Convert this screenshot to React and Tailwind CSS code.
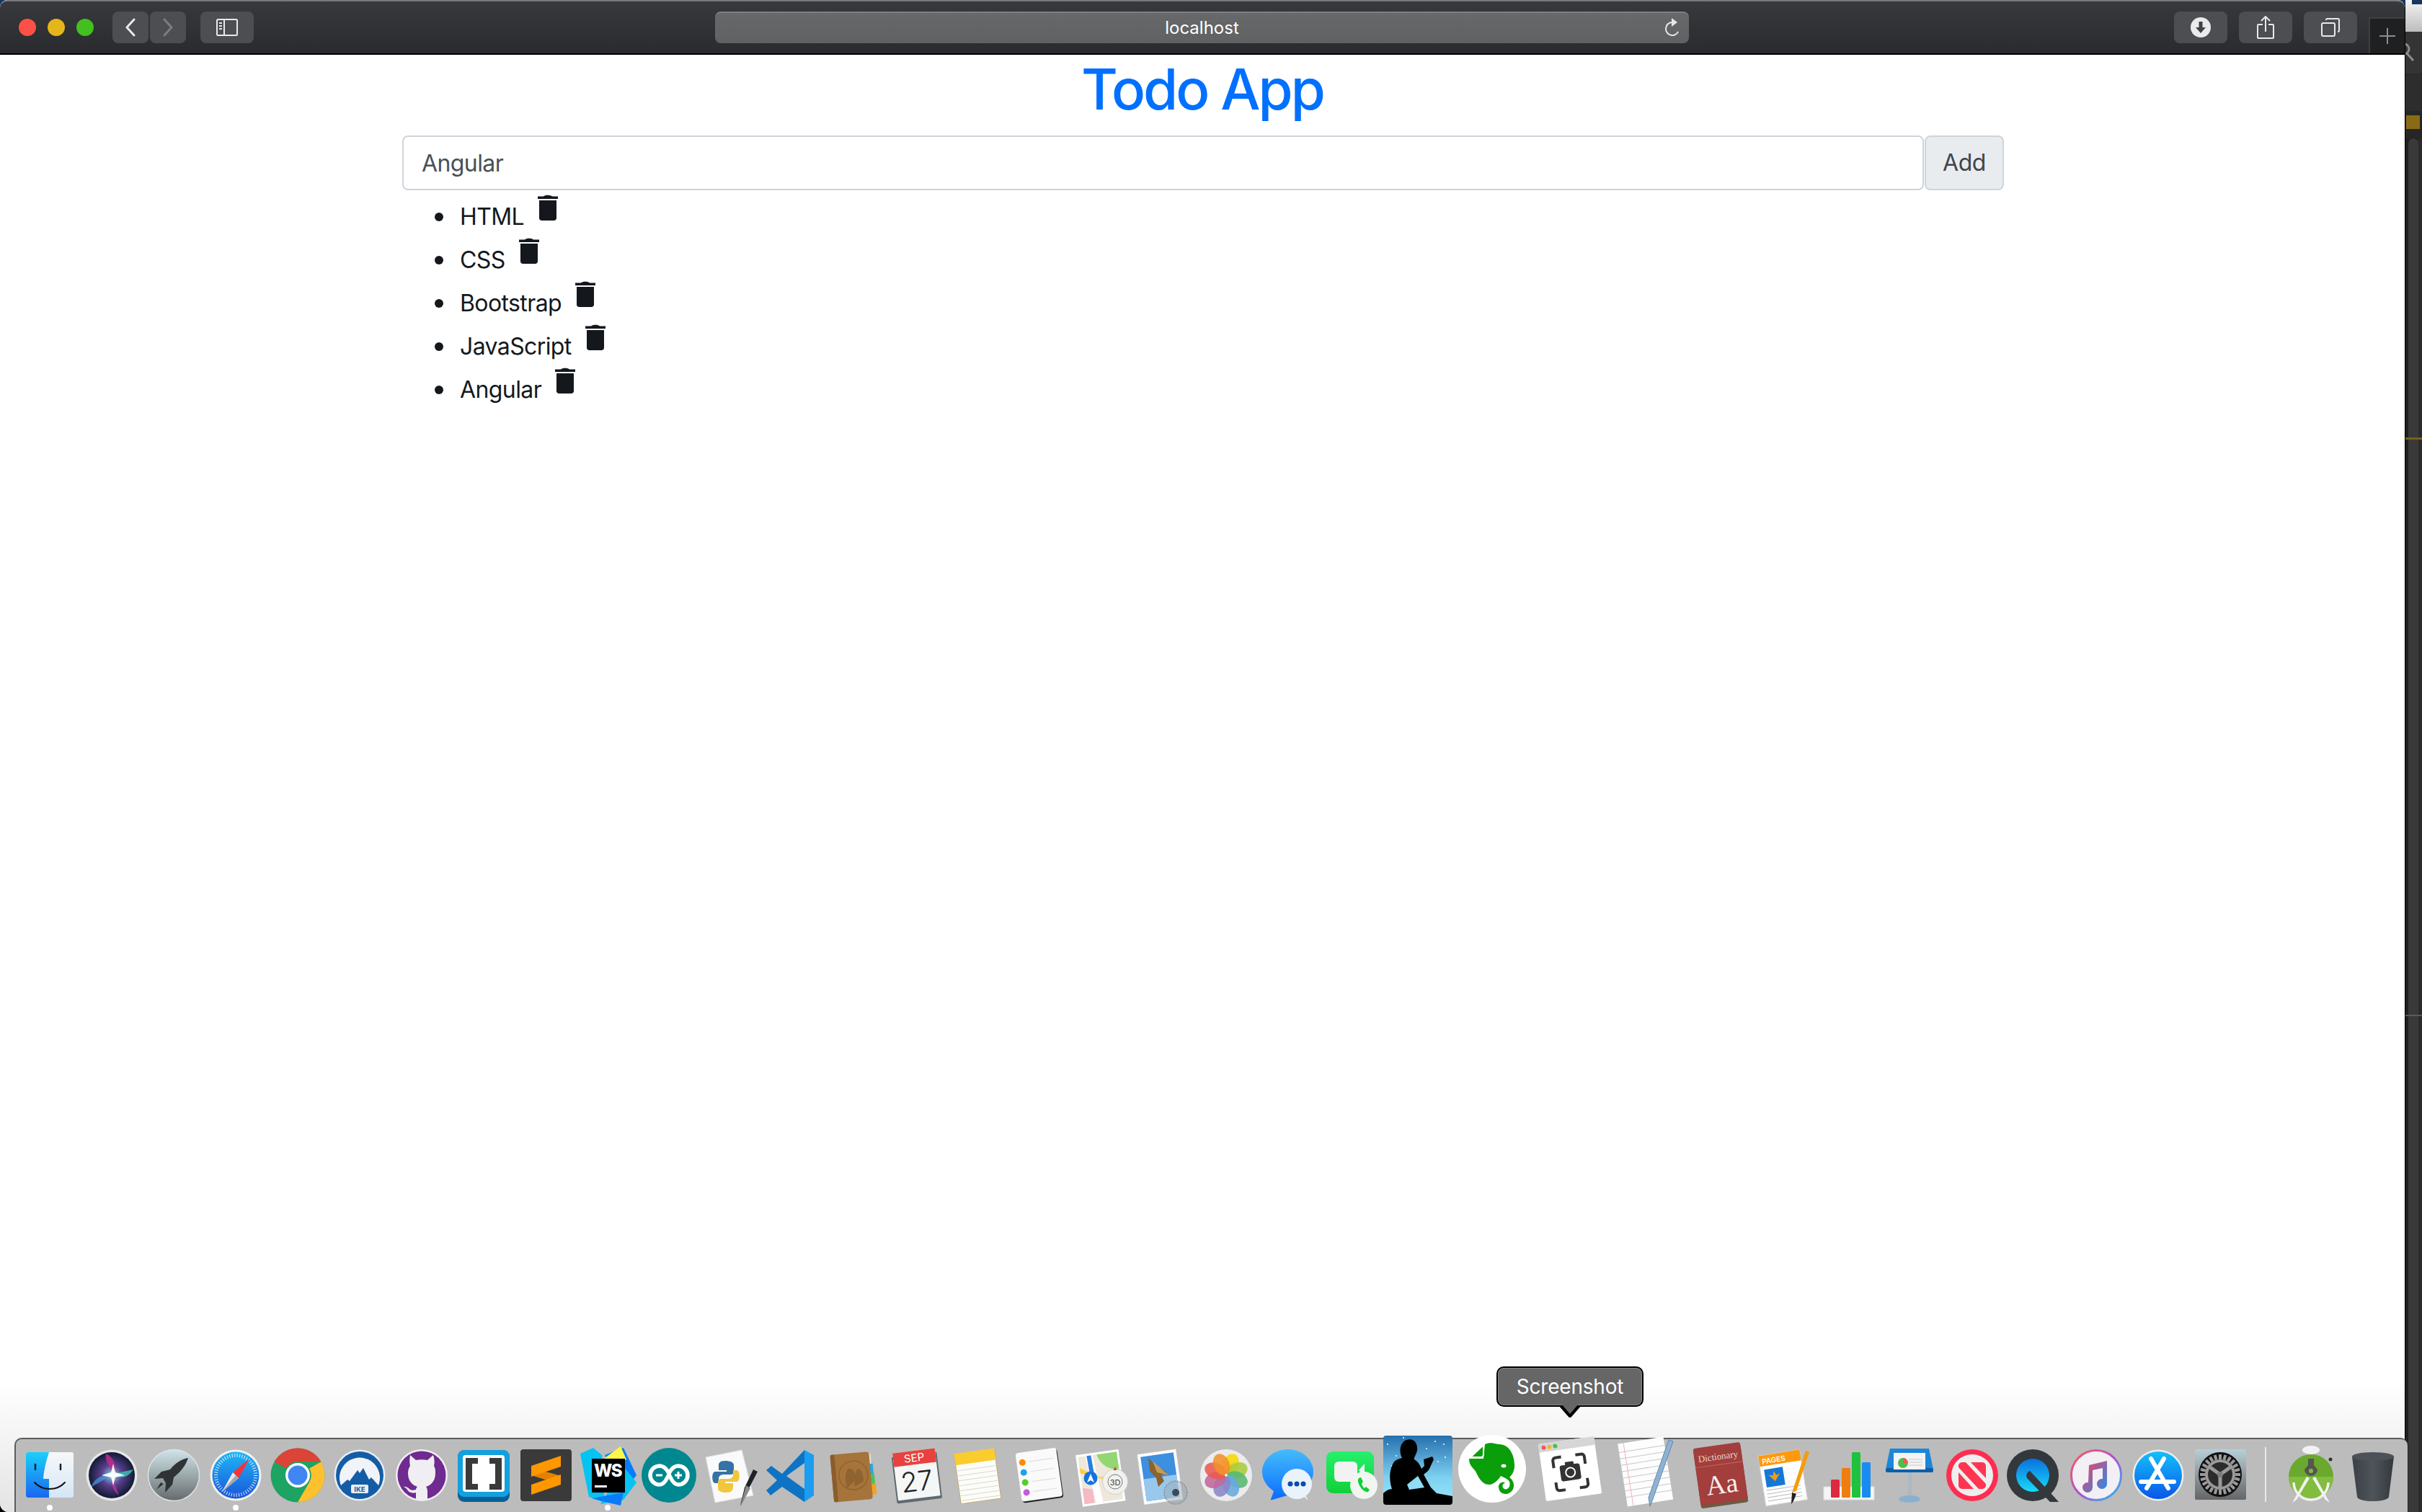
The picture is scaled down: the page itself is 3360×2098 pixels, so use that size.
import React from "react";

const todos = ["HTML", "CSS", "Bootstrap", "JavaScript", "Angular"];

// trash icon of the list rows
function TrashIcon() {
  return (
    <svg viewBox="0 0 28 36" className="inline-block align-top ml-[19px] -mt-[1px] w-[28px] h-[36px]">
      <path d="M8 2.6C10 .2 18 .2 20 2.6H28V6H0V2.6Z" fill="#14181d" />
      <path d="M2 8H26V32.5C26 34.5 24.5 36 22.5 36H5.5C3.5 36 2 34.5 2 32.5Z" fill="#14181d" />
    </svg>
  );
}

function ToolButton({ className, children }) {
  return (
    <div className={`h-[44px] rounded-[8px] bg-[#4c4e51] flex items-center justify-center ${className}`}>
      {children}
    </div>
  );
}

function TitleBar() {
  return (
    <header className="relative h-[76px] shrink-0 flex items-start rounded-t-[10px] border-t-2 border-b-2 border-t-[#77787a] border-b-black bg-linear-to-b from-[#37393c] to-[#2a2b2e]">
      <div className="flex gap-[16px] ml-[26px] mt-[24px]">
        <span className="w-[24px] h-[24px] rounded-full bg-[#ff5047]" />
        <span className="w-[24px] h-[24px] rounded-full bg-[#e4b61a]" />
        <span className="w-[24px] h-[24px] rounded-full bg-[#43bf1f]" />
      </div>
      <div className="flex gap-[2px] ml-[26px] mt-[14px]">
        <ToolButton className="w-[50px]">
          <svg width="16" height="26" viewBox="0 0 16 26" fill="none" stroke="#e8e9ea" strokeWidth="3" strokeLinecap="round" strokeLinejoin="round"><path d="M13 2 3 13l10 11" /></svg>
        </ToolButton>
        <ToolButton className="w-[50px]">
          <svg width="16" height="26" viewBox="0 0 16 26" fill="none" stroke="#7b7d80" strokeWidth="3" strokeLinecap="round" strokeLinejoin="round"><path d="m3 2 10 11L3 24" /></svg>
        </ToolButton>
      </div>
      <ToolButton className="w-[74px] ml-[20px] mt-[14px]">
        <svg width="30" height="24" viewBox="0 0 30 24" fill="none" stroke="#e8e9ea" strokeWidth="2"><rect x="1" y="1" width="28" height="22" rx="1.5" /><path d="M11 1v22M4 6h4M4 10h4M4 14h4" /></svg>
      </ToolButton>
      <div className="relative w-[1351px] h-[44px] ml-[640px] mt-[14px] rounded-[8px] border-t-2 border-[#7e8082] bg-linear-to-b from-[#66686a] to-[#5f6163] flex items-center justify-center">
        <span className="text-[24px] text-white">localhost</span>
        <svg className="absolute right-[12px] top-[6px]" width="22" height="30" viewBox="0 0 22 30" fill="none" stroke="#e6e6e6" strokeWidth="2"><path d="M11 7a9 9 0 1 0 9 9" transform="rotate(25 11 16)" /><path d="M10 1l8 6-8 6Z" fill="#e6e6e6" stroke="none" /></svg>
      </div>
      <div className="flex gap-[16px] ml-[673px] mt-[14px]">
        <ToolButton className="w-[74px]">
          <svg width="28" height="28" viewBox="0 0 28 28"><circle cx="14" cy="14" r="14" fill="#e9eaeb" /><path d="M11.5 6h5v8H21l-7 8-7-8h4.500Z" fill="#404245" /></svg>
        </ToolButton>
        <ToolButton className="w-[74px]">
          <svg width="24" height="32" viewBox="0 0 24 32" fill="none" stroke="#e8e9ea" strokeWidth="2"><path d="M8 12H2a1 1 0 0 0-1 1v17a1 1 0 0 0 1 1h20a1 1 0 0 0 1-1V13a1 1 0 0 0-1-1h-6M12 22V2M6 7l6-6 6 6" /></svg>
        </ToolButton>
        <ToolButton className="w-[74px]">
          <svg width="26" height="26" viewBox="0 0 26 26" fill="none" stroke="#e8e9ea" strokeWidth="2"><rect x="1" y="7" width="18" height="18" rx="2" /><path d="M7 3V2.500A1.500 1.500 0 0 1 8.500 1H23.500A1.500 1.500 0 0 1 25 2.500V17.500A1.500 1.500 0 0 1 23.500 19H23" /></svg>
        </ToolButton>
      </div>
      <div className="absolute right-0 bottom-0 w-[50px] h-[50px] bg-[#1f2022] border-l-2 border-t-2 border-[#3d3f42] flex items-center justify-center">
        <svg width="24" height="24" viewBox="0 0 24 24" stroke="#8d8e90" strokeWidth="2"><path d="M12 1v22M1 12h22" /></svg>
      </div>
    </header>
  );
}

function Icon({ size = 76, className = "", children }) {
  return (
    <svg width={size} height={size} viewBox={`0 0 ${size} ${size}`} className={`overflow-visible ${className}`}>
      {children}
    </svg>
  );
}

const Finder = () => (
  <Icon>
    <defs>
      <linearGradient id="fa" x1="0" y1="0" x2="0" y2="1"><stop offset="0" stopColor="#1ad0fb" /><stop offset="1" stopColor="#1a66f0" /></linearGradient>
      <linearGradient id="fb" x1="0" y1="0" x2="0" y2="1"><stop offset="0" stopColor="#f6f8fa" /><stop offset="1" stopColor="#d6e6f6" /></linearGradient>
    </defs>
    <rect x="5" y="6" width="66" height="63" rx="3" fill="url(#fb)" />
    <path d="M8 6H37C33 18 30 30 29 43H37V69H8A3 3 0 0 1 5 66V9A3 3 0 0 1 8 6Z" fill="url(#fa)" />
    <path d="M18 23v7M53 23v7" stroke="#123" strokeWidth="2.500" strokeLinecap="round" />
    <path d="M17 48C28 60 48 60 59 48" stroke="#111" strokeWidth="2" fill="none" strokeLinecap="round" />
  </Icon>
);

const Siri = () => (
  <Icon>
    <defs>
      <radialGradient id="sa"><stop offset="0" stopColor="#7fd8e8" /><stop offset=".45" stopColor="#5a3f8e" /><stop offset="1" stopColor="#101a33" /></radialGradient>
    </defs>
    <circle cx="38" cy="38" r="35.500" fill="#e6e6e6" />
    <circle cx="38" cy="38" r="32" fill="url(#sa)" />
    <path d="M30 8C42 14 46 26 40 36 34 24 28 18 30 8Z" fill="#c22d8c" opacity=".8" />
    <path d="M40 36 68 30C60 42 50 44 40 36Z" fill="#3ec7b8" opacity=".8" />
    <path d="M38 38 48 66C40 60 36 50 38 38Z" fill="#c0389a" opacity=".7" />
    <path d="M38 38 10 54C12 44 24 36 38 38Z" fill="#40a0e8" opacity=".7" />
    <path d="M40 22 43 34 56 38 43 41 40 52 37 41 24 38 37 34Z" fill="#fff" opacity=".95" />
  </Icon>
);

const Launchpad = () => (
  <Icon>
    <defs>
      <linearGradient id="la" x1="0" y1="0" x2="0" y2="1"><stop offset="0" stopColor="#cfe3e8" /><stop offset=".55" stopColor="#97a3a6" /><stop offset="1" stopColor="#66696b" /></linearGradient>
    </defs>
    <circle cx="38" cy="38" r="35.500" fill="url(#la)" stroke="#d8e4e6" strokeWidth="1.500" />
    <path d="M58 14C50 15 40 21 33 30L21 33 11 43 23 42 27 49 26 62 36 51 38 41C48 33 55 24 58 14Z" fill="#303335" />
    <path d="M24 50 14 58 20 48Z" fill="#303335" />
  </Icon>
);

const Safari = () => (
  <Icon>
    <defs>
      <linearGradient id="saf" x1="0" y1="0" x2="0" y2="1"><stop offset="0" stopColor="#1fb6f6" /><stop offset="1" stopColor="#1a55d8" /></linearGradient>
    </defs>
    <circle cx="38" cy="38" r="35.500" fill="#f2f2f2" />
    <circle cx="38" cy="38" r="32.500" fill="url(#saf)" />
    <circle cx="38" cy="38" r="27.500" fill="none" stroke="#fff" strokeWidth="5" strokeDasharray="1 2.450" opacity=".85" />
    <path d="M57 15 42 42 34 34Z" fill="#f2343c" />
    <path d="M19 61 34 34 42 42Z" fill="#e8e8e8" />
    <path d="M19 61 38 38 42 42Z" fill="#a8a8a8" />
  </Icon>
);

const Chrome = () => (
  <Icon>
    <circle cx="38" cy="38" r="37.500" fill="#1da362" />
    <path d="M38 .5A37.500 37.500 0 0 1 70.500 19.250H38A18.750 18.750 0 0 0 21.800 28.600L5.500 19.250A37.500 37.500 0 0 1 38 .5Z" fill="#db4437" />
    <path d="M70.500 19.250A37.500 37.500 0 0 1 38 75.500L54.200 47.400A18.750 18.750 0 0 0 54.200 28.600Z" fill="#fdc12f" />
    <circle cx="38" cy="38" r="17" fill="#fff" />
    <circle cx="38" cy="38" r="13.500" fill="#4285f4" />
  </Icon>
);

const Nord = () => (
  <Icon>
    <circle cx="38" cy="38" r="35.500" fill="#e9eef4" />
    <circle cx="38" cy="38" r="33" fill="#145da6" />
    <path d="M12 52A28 28 0 1 1 64 52L54 41 51 44 43 28 38 35 35 31 24 46 21 44Z" fill="#f0f4f8" />
    <rect x="26" y="51" width="24" height="12" rx="2" fill="#e9eef4" />
    <text x="38" y="60.500" textAnchor="middle" fontSize="9.500" fontWeight="700" fill="#145da6" fontFamily="Inter, sans-serif">IKE</text>
  </Icon>
);

const Github = () => (
  <Icon>
    <circle cx="38" cy="38" r="36" fill="#f0eef2" />
    <circle cx="38" cy="38" r="33.500" fill="#6f2b90" />
    <path d="M22 10 30 17C35 16 41 16 46 17L54 10C56 16 56 21 55 25 57 28 57 32 57 35 57 47 50 52 44 54 46 56 46 59 46 62V71C41 73 35 73 30 71V62C26 63 21 63 18 58 17 56 15 55 13 54 17 53 20 56 22 58 24 59 27 59 30 58 30 56 31 55 32 54 26 52 19 47 19 35 19 31 20 28 22 25 21 21 21 16 22 10Z" fill="#f0eef2" />
  </Icon>
);

const Brackets = () => (
  <Icon>
    <rect x="2" y="3" width="72" height="72" rx="9" fill="#0a5f94" />
    <rect x="2" y="3" width="72" height="65" rx="9" fill="#13a0de" />
    <rect x="9" y="10" width="58" height="51" rx="4" fill="#fff" />
    <path d="M13 14H30V22H22V50H30V58H13ZM63 14H46V22H54V50H46V58H63Z" fill="#3a3a3a" />
  </Icon>
);

const Sublime = () => (
  <Icon>
    <rect x="3" y="2" width="71" height="72" rx="4" fill="#3a3a3a" />
    <path d="M18 27 59 39V51L18 38Z" fill="#e58100" />
    <path d="M59 11V26L18 40V25Z" fill="#ff9800" />
    <path d="M59 37V51L18 65V51Z" fill="#ff9800" />
  </Icon>
);

const WebStorm = () => (
  <Icon>
    <path d="M0 8 18 0 30 10 34 76 12 68Z" fill="#07c3f2" />
    <path d="M34 10 60 0 78 38 58 62Z" fill="#087cfa" />
    <path d="M34 14 56 -2 64 16 48 24Z" fill="#fcf84a" />
    <path d="M60 26 78 48 60 72 28 78Z" fill="#07c3f2" />
    <path d="M16 70 60 62 56 80 30 74Z" fill="#087cfa" />
    <rect x="16" y="15" width="46" height="47" fill="#000" />
    <text x="19" y="40" fontSize="24" fontWeight="800" fill="#fff" fontFamily="Inter, sans-serif" letterSpacing="-1.500">WS</text>
    <rect x="20" y="52" width="17" height="3" fill="#fff" />
  </Icon>
);

const Arduino = () => (
  <Icon>
    <ellipse cx="38" cy="38" rx="38" ry="38" fill="#00878f" />
    <path d="M25 25C34 25 40 38 38 38S42 25 51 25A13 13 0 0 1 51 51C42 51 40 38 38 38S34 51 25 51A13 13 0 0 1 25 25Z" fill="none" stroke="#fff" strokeWidth="5.500" />
    <path d="M20 38H29M46 38H56M51 33V43" stroke="#fff" strokeWidth="3" />
  </Icon>
);

const PythonDoc = () => (
  <Icon>
    <path d="M4 13 54 3 70 66 17 76Z" fill="#fafafa" stroke="#ddd" />
    <path d="M31 18C21 18 22 23 22 27V31H33V33H17C12 33 12 49 17 49H22V43C22 39 25 37 29 37H38C42 37 43 35 43 32V24C43 20 38 18 31 18Z" fill="#3572a5" />
    <path d="M32 62C42 62 42 57 42 53V49H31V47H47C52 47 52 31 47 31H42V37C42 41 39 43 35 43H26C22 43 21 45 21 48V56C21 60 26 62 32 62Z" fill="#f2c63c" />
    <path d="M76 33 64 56 52 80 58 55 70 30Z" fill="#1e2228" />
    <path d="M60 52 66 56 52 82Z" fill="#8a8a8a" />
  </Icon>
);

const VSCode = () => (
  <Icon>
    <path d="M55 3 24 36 9 25 2 31 17 45 2 59 8 66 24 54 55 75Z" fill="#0e73c4" />
    <path d="M55 3 68 10V66L55 75Z" fill="#1b9df0" />
    <path d="M55 21V57L30 39Z" fill="#bdbdbd" />
  </Icon>
);

const Contacts = () => (
  <Icon>
    <g transform="rotate(-5 38 38)">
      <rect x="56" y="10" width="7" height="15" fill="#e0e0e0" />
      <rect x="58" y="24" width="7" height="15" fill="#28a6df" />
      <rect x="59" y="38" width="7" height="15" fill="#4fc061" />
      <rect x="60" y="52" width="7" height="15" fill="#f2a224" />
      <rect x="7" y="7" width="54" height="66" rx="4" fill="#a6743a" />
      <rect x="7" y="7" width="6" height="66" rx="2" fill="#8a5d2c" />
      <circle cx="37" cy="38" r="20" fill="#a6743a" stroke="#8f6330" strokeWidth="1.500" />
      <path d="M27 55C24 46 25 31 32 28 38 29 41 36 40 44 36 48 33 50 27 55Z" fill="#8f6330" />
      <path d="M36 53C40 48 39 31 44 29 50 31 51 42 50 47 46 50 42 52 36 53Z" fill="#8f6330" />
    </g>
  </Icon>
);

const Calendar = () => (
  <Icon>
    <g transform="rotate(-7 38 38)">
      <rect x="7" y="9" width="63" height="65" rx="2" fill="#5e6a72" />
      <rect x="9" y="4" width="59" height="66" rx="1" fill="#f5f6f6" />
      <rect x="9" y="4" width="59" height="19" fill="#e8423f" />
      <text x="38" y="19" textAnchor="middle" fontSize="15" fill="#fff" fontFamily="Inter, sans-serif">SEP</text>
      <text x="38" y="60" textAnchor="middle" fontSize="38" fontWeight="300" fill="#222" fontFamily="Inter, sans-serif">27</text>
    </g>
  </Icon>
);

const Notes = () => (
  <Icon>
    <g transform="rotate(-8 38 38)">
      <rect x="9" y="6" width="56" height="68" fill="#fdfdf8" stroke="#b89a50" strokeWidth=".7" />
      <rect x="9" y="4" width="56" height="16" fill="#fbcc2d" />
      {[28, 35, 42, 49, 56, 63, 70].map((y) => (
        <path key={y} d={`M10 ${y}H64`} stroke="#d6d6d6" strokeWidth="1" />
      ))}
    </g>
  </Icon>
);

const Reminders = () => (
  <Icon>
    <g transform="rotate(-8 38 38)">
      <rect x="9" y="5" width="57" height="68" rx="4" fill="#222" />
      <rect x="8" y="3" width="57" height="68" rx="4" fill="#fafafa" />
      {[["#ff8a00", 17], ["#1aa3e8", 31], ["#4fd122", 45], ["#c35be0", 59]].map(([c, y]) => (
        <g key={y}>
          <circle cx="16" cy={y} r="4.500" fill={c} />
          <path d={`M25 ${y}H59`} stroke="#d8d8d8" strokeWidth="1" />
        </g>
      ))}
    </g>
  </Icon>
);

const MapsIcon = () => (
  <Icon>
    <g transform="rotate(-8 34 36)">
      <rect x="5" y="6" width="60" height="72" fill="#fff" />
      <rect x="8" y="9" width="54" height="66" fill="#eee8da" />
      <path d="M34 9H62V34C48 32 37 24 34 9Z" fill="#93d772" />
      <path d="M8 24 60 60V48L8 32Z" fill="#ffcf3f" />
      <path d="M8 52 22 56V75H8Z" fill="#f6bac4" />
      <path d="M18 9H28L34 75H24Z" fill="#fff" />
      <path d="M20 9H26L27 36H21Z" fill="#2b7fe0" />
    </g>
    <circle cx="22" cy="42" r="9.500" fill="#1473e0" />
    <path d="M22 36 27 48 22 45 17 48Z" fill="#fff" />
    <circle cx="56" cy="47" r="17.500" fill="#f1f1ee" stroke="#cfcfcf" />
    <circle cx="56" cy="47" r="10" fill="none" stroke="#777" />
    <text x="56" y="51.500" textAnchor="middle" fontSize="11" fill="#444" fontFamily="Inter, sans-serif">3D</text>
    <path d="M56 26 58.500 31H53.500Z" fill="#e33" />
  </Icon>
);

const Mail = () => (
  <Icon>
    <g transform="rotate(-8 34 38)">
      <rect x="5" y="5" width="54" height="70" fill="#fff" stroke="#ddd" strokeDasharray="2 2" />
      <rect x="9" y="9" width="46" height="62" fill="#3d8fe0" />
      <rect x="9" y="40" width="46" height="31" fill="#98c8ec" />
    </g>
    <path d="M16 14 26 24 42 34 34 38 38 46 30 54 27 42 18 32Z" fill="#8a6330" />
    <path d="M22 18 44 38 28 34Z" fill="#c49a5e" />
    <circle cx="54" cy="62" r="16" fill="#9aa9b5" fillOpacity=".5" stroke="#8a8a8a" strokeWidth="1.500" strokeDasharray="2 1.500" />
    <circle cx="54" cy="62" r="5" fill="#3c4a58" />
  </Icon>
);

const Photos = () => {
  const colors = ["#f6d800", "#a9cc3d", "#56b870", "#66a8de", "#8a86c8", "#c2689c", "#ea5a50", "#f3912c"];
  return (
    <Icon>
      <ellipse cx="38" cy="38" rx="36" ry="36" fill="#ececec" />
      {colors.map((c, i) => (
        <ellipse key={c} cx="38" cy="22" rx="11" ry="15.500" fill={c} opacity=".88" transform={`rotate(${i * 45 + 22} 38 38)`} />
      ))}
      <circle cx="38" cy="38" r="1.800" fill="#fff" />
    </Icon>
  );
};

const Messages = () => (
  <Icon>
    <defs>
      <linearGradient id="ma" x1="0" y1="0" x2="0" y2="1"><stop offset="0" stopColor="#45bcfb" /><stop offset="1" stopColor="#0a6cff" /></linearGradient>
    </defs>
    <path d="M38 2C57 2 73 16 73 33 73 48 61 60 44 64L16 72C13 73 14 70 15 69L18 60C8 53 2 44 2 33 2 16 18 2 38 2Z" fill="url(#ma)" />
    <circle cx="50" cy="50" r="21" fill="#eaf2fa" />
    <path d="M58 66 66 73 60 62Z" fill="#eaf2fa" />
    <circle cx="41" cy="50" r="3.500" fill="#0a4da8" />
    <circle cx="50" cy="50" r="3.500" fill="#0a4da8" />
    <circle cx="59" cy="50" r="3.500" fill="#0a4da8" />
  </Icon>
);

const FaceTime = () => (
  <Icon>
    <defs>
      <linearGradient id="fta" x1="0" y1="0" x2="0" y2="1"><stop offset="0" stopColor="#26f06c" /><stop offset="1" stopColor="#10d038" /></linearGradient>
    </defs>
    <rect x="5" y="5" width="66" height="58" rx="9" fill="url(#fta)" />
    <rect x="16" y="19" width="32" height="28" rx="6" fill="#f2f2f2" />
    <path d="M50 31 58 22V44Z" fill="#f2f2f2" />
    <circle cx="57" cy="52" r="19" fill="#f2f6f0" />
    <path d="M50 42C48 44 49 49 52 54 55 59 60 62 63 61L65 58 60 54 58 56C56 55 54 51 54 49L56 47 53 41Z" fill="#10d038" />
  </Icon>
);

const Kindle = () => (
  <Icon size={96}>
    <defs>
      <linearGradient id="ka" x1="0" y1="0" x2="0" y2="1"><stop offset="0" stopColor="#2670ad" /><stop offset=".6" stopColor="#7dd0f0" /><stop offset="1" stopColor="#9be8fb" /></linearGradient>
    </defs>
    <rect x="0" y="0" width="96" height="96" rx="4" fill="url(#ka)" />
    {[[6, 12], [18, 28], [12, 42], [72, 8], [86, 30], [60, 18], [84, 12], [28, 3], [76, 36]].map(([x, y]) => (
      <circle key={x} cx={x} cy={y} r="1" fill="#fff" />
    ))}
    <path d="M32 6C42 3 48 10 47 20 46 27 42 30 43 33 50 37 51 42 53 46L57 42 56 33 68 29 70 33 64 46C62 50 58 52 56 54L66 72 74 80 96 84V92A4 4 0 0 1 92 96H4A4 4 0 0 1 0 92V80C4 76 8 74 12 74 8 62 8 48 14 38 16 34 22 32 26 31 22 24 22 10 32 6Z" fill="#000" />
    <path d="M33 68 48 56 57 72 36 75Z" fill="#8fdcf5" />
  </Icon>
);

const Evernote = () => (
  <Icon size={96}>
    <circle cx="48" cy="48" r="47" fill="#fff" />
    <path d="M38 14C46 10 54 14 58 14 72 14 80 30 79 46 78 54 74 58 72 60 78 64 80 72 76 78 70 86 58 84 57 74 56 68 64 64 66 68 62 68 61 74 65 76 70 78 74 72 72 66 70 62 64 60 60 58 56 64 50 70 44 70 32 70 28 56 24 50 20 46 16 42 16 34L36 34Z" fill="#0a9e0a" />
    <path d="M18 32 36 15V28A4 4 0 0 1 32 32Z" fill="#0a9e0a" stroke="#fff" strokeWidth="2" />
    <ellipse cx="64" cy="44" rx="3.500" ry="2.500" fill="#fff" />
  </Icon>
);

const ScreenshotApp = () => (
  <Icon size={96}>
    <g transform="rotate(-8 48 48)">
      <rect x="9" y="8" width="78" height="80" rx="2" fill="#fff" />
      <rect x="9" y="8" width="78" height="12" fill="#d6d6d6" />
      <circle cx="16" cy="14" r="3" fill="#f05a50" />
      <circle cx="24" cy="14" r="3" fill="#f2b52c" />
      <circle cx="32" cy="14" r="3" fill="#3dc54c" />
      <path d="M26 44V34A4 4 0 0 1 30 30H38M58 30H66A4 4 0 0 1 70 34V44M70 64V72A4 4 0 0 1 66 76H58M38 76H30A4 4 0 0 1 26 72V64" fill="none" stroke="#333" strokeWidth="4" />
      <rect x="34" y="42" width="28" height="22" rx="3" fill="#333" />
      <rect x="42" y="38" width="12" height="6" rx="1" fill="#333" />
      <circle cx="48" cy="53" r="6.500" fill="none" stroke="#fff" strokeWidth="2" />
    </g>
  </Icon>
);

const TextEdit = () => (
  <Icon size={96}>
    <g transform="rotate(-9 44 48)">
      <rect x="12" y="2" width="64" height="88" fill="#fdfdfd" />
      {[14, 23, 32, 41, 50, 59, 68, 77].map((y) => (
        <path key={y} d={`M12 ${y}H76`} stroke="#c6c6c6" />
      ))}
      <path d="M20 2V90" stroke="#f0b4b4" />
    </g>
    <path d="M76 2 82 4 54 84 50 94 48 82Z" fill="#8eb3d4" stroke="#6286a8" />
  </Icon>
);

const Dictionary = () => (
  <Icon size={96}>
    <g transform="rotate(-8 48 48)">
      <rect x="14" y="10" width="66" height="80" rx="3" fill="#6b5a44" />
      <rect x="14" y="6" width="66" height="80" rx="3" fill="#a23e3c" />
      <text x="47" y="26" textAnchor="middle" fontSize="13" fill="#e8d4c8" fontFamily="Liberation Serif, serif">Dictionary</text>
      <path d="M14 33H80" stroke="#c06a66" />
      <text x="47" y="73" textAnchor="middle" fontSize="38" fill="#f6ecea" fontFamily="Liberation Serif, serif">Aa</text>
    </g>
  </Icon>
);

const Pages = () => (
  <Icon>
    <g transform="rotate(-9 36 40)">
      <rect x="4" y="6" width="58" height="70" fill="#fff" stroke="#ddd" />
      <rect x="4" y="6" width="58" height="15" fill="#ff9a0f" />
      <text x="8" y="18" fontSize="10" fontWeight="600" fill="#fff" fontFamily="Inter, sans-serif">PAGES</text>
      <rect x="9" y="26" width="26" height="25" fill="#1478d6" />
      <path d="M22 44 14 34 20 36 22 30 25 36 30 34Z" fill="#f39a18" />
      {[55, 60, 65, 70].map((y) => (
        <path key={y} d={`M8 ${y}H56`} stroke="#b8b8b8" />
      ))}
    </g>
    <path d="M65 4 70 6 52 60 46 62Z" fill="#f59c0c" />
    <path d="M46 62 52 64 48 74 45 78Z" fill="#222" />
  </Icon>
);

const NumbersApp = () => (
  <Icon>
    <rect x="4" y="54" width="70" height="18" fill="#f5f5f5" stroke="#ddd" />
    <rect x="14" y="44" width="12" height="25" rx="1.500" fill="#dc2a3e" />
    <rect x="29" y="28" width="12" height="41" rx="1.500" fill="#ef7d10" />
    <rect x="43" y="6" width="12" height="63" rx="1.500" fill="#1ec23e" />
    <rect x="57" y="20" width="12" height="49" rx="1.500" fill="#1a8cf0" />
  </Icon>
);

const Keynote = () => (
  <Icon>
    <path d="M10 1H64L70 30H4Z" fill="#1c86d8" />
    <rect x="4" y="28" width="66" height="6" rx="2" fill="#0e5fa8" />
    <rect x="15" y="7" width="44" height="23" fill="#f4f4f4" />
    <circle cx="28" cy="21" r="7" fill="#4cbf4c" />
    <path d="M28 21V14A7 7 0 0 1 35 21Z" fill="#f05a50" />
    <path d="M36 16H55M36 20H55M36 24H55" stroke="#c8c8c8" />
    <rect x="35" y="34" width="5" height="34" fill="#adb8c0" />
    <ellipse cx="37" cy="71" rx="15" ry="5" fill="#8ab0cf" />
  </Icon>
);

const News = () => (
  <Icon>
    <circle cx="38" cy="38" r="36" fill="#ff2d50" />
    <circle cx="38" cy="38" r="29" fill="#eeeeee" />
    <path d="M19 26A5 5 0 0 1 24 20H29L57 50V52A5 5 0 0 1 52 57H47L19 27ZM19 34 40 57H24A5 5 0 0 1 19 52ZM36 20H52A5 5 0 0 1 57 25V42Z" fill="#ff3552" />
  </Icon>
);

const QuickTime = () => (
  <Icon>
    <defs>
      <linearGradient id="qa" x1="0" y1="0" x2="0" y2="1"><stop offset="0" stopColor="#0a70e0" /><stop offset="1" stopColor="#19dcfa" /></linearGradient>
    </defs>
    <circle cx="36" cy="38" r="36" fill="#33383d" />
    <circle cx="36" cy="38" r="23" fill="url(#qa)" />
    <path d="M32 32 62 64 72 75H60L28 42A7 7 0 0 1 32 32Z" fill="#33383d" />
  </Icon>
);

const Music = () => (
  <Icon>
    <defs>
      <linearGradient id="mb" x1="0" y1="0" x2="1" y2="1"><stop offset="0" stopColor="#ff5a50" /><stop offset=".5" stopColor="#b050d0" /><stop offset="1" stopColor="#20c0f0" /></linearGradient>
      <linearGradient id="mc" x1="0" y1="0" x2="1" y2="1"><stop offset="0" stopColor="#ff3c60" /><stop offset="1" stopColor="#2090f0" /></linearGradient>
    </defs>
    <circle cx="38" cy="38" r="34.500" fill="#f2f0f4" stroke="url(#mb)" strokeWidth="3" />
    <path d="M28 24 53 18V50A7 7 0 1 1 47 43V28L33 31V55A7 7 0 1 1 27 48Z" fill="url(#mc)" />
  </Icon>
);

const AppStore = () => (
  <Icon>
    <defs>
      <linearGradient id="aa" x1="0" y1="0" x2="0" y2="1"><stop offset="0" stopColor="#14c0fb" /><stop offset="1" stopColor="#0a56e8" /></linearGradient>
    </defs>
    <circle cx="38" cy="38" r="35.500" fill="#eeeeee" />
    <circle cx="38" cy="38" r="33" fill="url(#aa)" />
    <path d="M28 15 52 56M46 15 22 56M14 47H60" stroke="#fff" strokeWidth="6" strokeLinecap="round" fill="none" />
  </Icon>
);

const SysPrefs = () => {
  const teeth = Array.from({ length: 24 }, (_, i) => i * 15);
  return (
    <Icon>
      <defs>
        <linearGradient id="pa" x1="0" y1="0" x2="0" y2="1"><stop offset="0" stopColor="#b8cfd8" /><stop offset="1" stopColor="#646668" /></linearGradient>
      </defs>
      <rect x="3" y="2" width="71" height="70" rx="2" fill="url(#pa)" />
      <ellipse cx="38" cy="37" rx="30" ry="31" fill="#111" />
      {teeth.map((t) => (
        <rect key={t} x="36" y="9" width="4" height="7" fill="#9a9a9a" transform={`rotate(${t} 38 37)`} />
      ))}
      <circle cx="38" cy="37" r="19" fill="#2c2c2c" stroke="#9a9a9a" strokeWidth="4" />
      <path d="M38 37 24 27M38 37 52 27M38 37V55" stroke="#9a9a9a" strokeWidth="5" />
      <circle cx="38" cy="37" r="4" fill="#7c7c7c" />
    </Icon>
  );
};

const AndroidStudio = () => (
  <Icon>
    <ellipse cx="38" cy="3" rx="12" ry="6" fill="#f2f2f2" />
    <circle cx="65" cy="16" r="2.500" fill="#333" />
    <circle cx="38" cy="40" r="31" fill="#6aa92d" />
    <path d="M7 40H69A31 31 0 0 1 7 40Z" fill="#82bd3f" />
    <path d="M34 15H42V24L47 30A8 8 0 0 1 29 30L34 24Z" fill="#555" />
    <circle cx="38" cy="32" r="3" fill="#82bd3f" />
    <path d="M32 40 12 76 18 72 36 42ZM44 40 64 76 58 72 40 42Z" fill="#f2f2f2" />
    <path d="M14 48A24 24 0 0 0 62 48" stroke="#f2f2f2" strokeWidth="3.500" fill="none" />
  </Icon>
);

const Trash = () => (
  <Icon>
    <defs>
      <linearGradient id="ta" x1="0" y1="0" x2="1" y2="0"><stop offset="0" stopColor="#3a4046" /><stop offset=".5" stopColor="#4e5459" /><stop offset="1" stopColor="#33383d" /></linearGradient>
    </defs>
    <path d="M9 12C20 6 56 6 67 12L60 68C58 76 18 76 16 68Z" fill="url(#ta)" />
    <ellipse cx="38" cy="12" rx="29" ry="6" fill="#4c5257" />
  </Icon>
);

const dockItems = [
  { C: Finder, w: 86, dot: true },
  { C: Siri, w: 86 },
  { C: Launchpad, w: 86 },
  { C: Safari, w: 86, dot: true },
  { C: Chrome, w: 86 },
  { C: Nord, w: 86 },
  { C: Github, w: 86 },
  { C: Brackets, w: 86 },
  { C: Sublime, w: 86 },
  { C: WebStorm, w: 86, dot: true },
  { C: Arduino, w: 84 },
  { C: PythonDoc, w: 86 },
  { C: VSCode, w: 86 },
  { C: Contacts, w: 86 },
  { C: Calendar, w: 86 },
  { C: Notes, w: 86 },
  { C: Reminders, w: 86 },
  { C: MapsIcon, w: 86 },
  { C: Mail, w: 86 },
  { C: Photos, w: 86 },
  { C: Messages, w: 86 },
  { C: FaceTime, w: 86 },
  { C: Kindle, w: 102, shift: "-mt-[14px]" },
  { C: Evernote, w: 104, shift: "-mt-[18px]" },
  { C: ScreenshotApp, w: 112, shift: "-mt-[18px]" },
  { C: TextEdit, w: 106, shift: "-mt-[6px]" },
  { C: Dictionary, w: 95 },
  { C: Pages, w: 86 },
  { C: NumbersApp, w: 86 },
  { C: Keynote, w: 86 },
  { C: News, w: 86 },
  { C: QuickTime, w: 86 },
  { C: Music, w: 86 },
  { C: AppStore, w: 86 },
  { C: SysPrefs, w: 86 },
  { divider: true, w: 40 },
  { C: AndroidStudio, w: 86 },
  { C: Trash, w: 86 },
];

function Dock() {
  return (
    <div className="absolute left-[20px] top-[1995px] w-[3320px] h-[103px] rounded-t-[10px] border-t-2 border-l-2 border-[#5c5c5c] border-r-0 bg-[#bcbcbc] flex items-start pl-[4px]">
      {dockItems.map((item, i) =>
        item.divider ? (
          <div key={i} style={{ width: item.w }} className="h-[100px] flex justify-center items-center">
            <div className="w-[2px] h-[76px] bg-[#e9e9e9] mt-[-2px]" />
          </div>
        ) : (
          <div key={i} style={{ width: item.w }} className="relative h-[100px] shrink-0 flex items-center justify-center">
            <div className={item.shift}>
              <item.C />
            </div>
            {item.dot && <span className="absolute bottom-[1px] left-1/2 -ml-[4px] w-[8px] h-[8px] rounded-full bg-white" />}
          </div>
        )
      )}
    </div>
  );
}

function Tooltip() {
  return (
    <div className="absolute left-[2076px] top-[1896px] w-[204px] h-[56px] rounded-[10px] bg-[#666666] border-2 border-black shadow-[inset_0_0_0_1px_#8a8a8a] flex items-center justify-center">
      <span className="text-[28px] tracking-[-0.2px] text-white">Screenshot</span>
      <svg className="absolute left-[84px] top-[50px]" width="32" height="20" viewBox="0 0 32 20">
        <path d="M0 2H32L18 18Q16 20 14 18Z" fill="black" />
        <path d="M4 0H28L16 14Z" fill="#666666" />
      </svg>
    </div>
  );
}

function EditorStrip() {
  return (
    <aside className="w-[23px] shrink-0 flex flex-col bg-[#222222]">
      <div className="h-[44px] bg-linear-to-b from-[#f4f4f4] to-[#bdbdbd] relative overflow-hidden">
        <div className="absolute right-0 top-0 w-[14px] h-[6px] bg-[#17365f]" />
      </div>
      <div className="h-[58px] bg-[#343434] relative overflow-hidden">
        <svg className="absolute left-[-8px] top-[16px]" width="22" height="28" viewBox="0 0 22 28" fill="none" stroke="#8c8c8c" strokeWidth="3"><circle cx="6" cy="8" r="7" /><path d="m10 14 9 10" /></svg>
      </div>
      <div className="h-[52px] bg-[#2d2d2d] border-t border-[#262626]" />
      <div className="h-[38px] bg-[#262626] pl-[1px] pt-[6px]">
        <div className="w-[19px] h-[19px] bg-[#8a6a14]" />
      </div>
      <div className="relative flex-1 flex">
        <div className="w-[4px] bg-[#1f1f1f]" />
        <div className="w-[14px] bg-[#393939] rounded-t-[7px]" />
        <div className="flex-1 bg-[#2b2b2b]" />
        <div className="absolute left-0 right-0 top-[415px] h-[3px] bg-[#77611e]" />
        <div className="absolute left-0 right-0 top-[1216px] h-[2px] bg-[#5a5a5a]" />
      </div>
    </aside>
  );
}

export default function App() {
  return (
    <div className="relative w-[3360px] h-[2098px] overflow-hidden flex bg-linear-to-b from-[#17365f] from-50% to-black to-50% font-['Inter',sans-serif]">
      <main className="relative w-[3337px] shrink-0 flex flex-col bg-white border-r border-black rounded-t-[10px] rounded-bl-[12px] overflow-hidden">
        <TitleBar />
        <h1 className="text-[78px] leading-[96px] tracking-[-3px] font-medium text-center text-[#0070ff] mb-[16px]">Todo App</h1>
        <div className="w-[2222px] ml-[558px]">
          <div className="flex">
            <input
              readOnly
              value="Angular"
              className="flex-1 h-[76px] px-[25px] text-[32px] tracking-[-0.6px] text-[#495057] bg-white border-2 border-[#ced4da] rounded-[8px] outline-none"
            />
            <button className="w-[110px] h-[76px] ml-[1px] text-[32px] tracking-[-0.5px] text-[#40464d] bg-[#e9ecef] border-2 border-[#ced4da] rounded-[8px]">
              Add
            </button>
          </div>
          <ul className="pl-[80px] pt-[7px] text-[32px] leading-[60px] tracking-[-0.6px] text-[#14181d]">
            {todos.map((t) => (
              <li key={t} className="relative h-[60px]">
                <span className="absolute left-[-35px] top-[24px] w-[12px] h-[12px] rounded-full bg-[#14181d]" />
                {t}
                <TrashIcon />
              </li>
            ))}
          </ul>
        </div>
        <div className="absolute left-0 right-0 top-[1920px] bottom-0 bg-linear-to-b from-white to-[#e4e4e4]" />
      </main>
      <EditorStrip />
      <Tooltip />
      <Dock />
    </div>
  );
}
